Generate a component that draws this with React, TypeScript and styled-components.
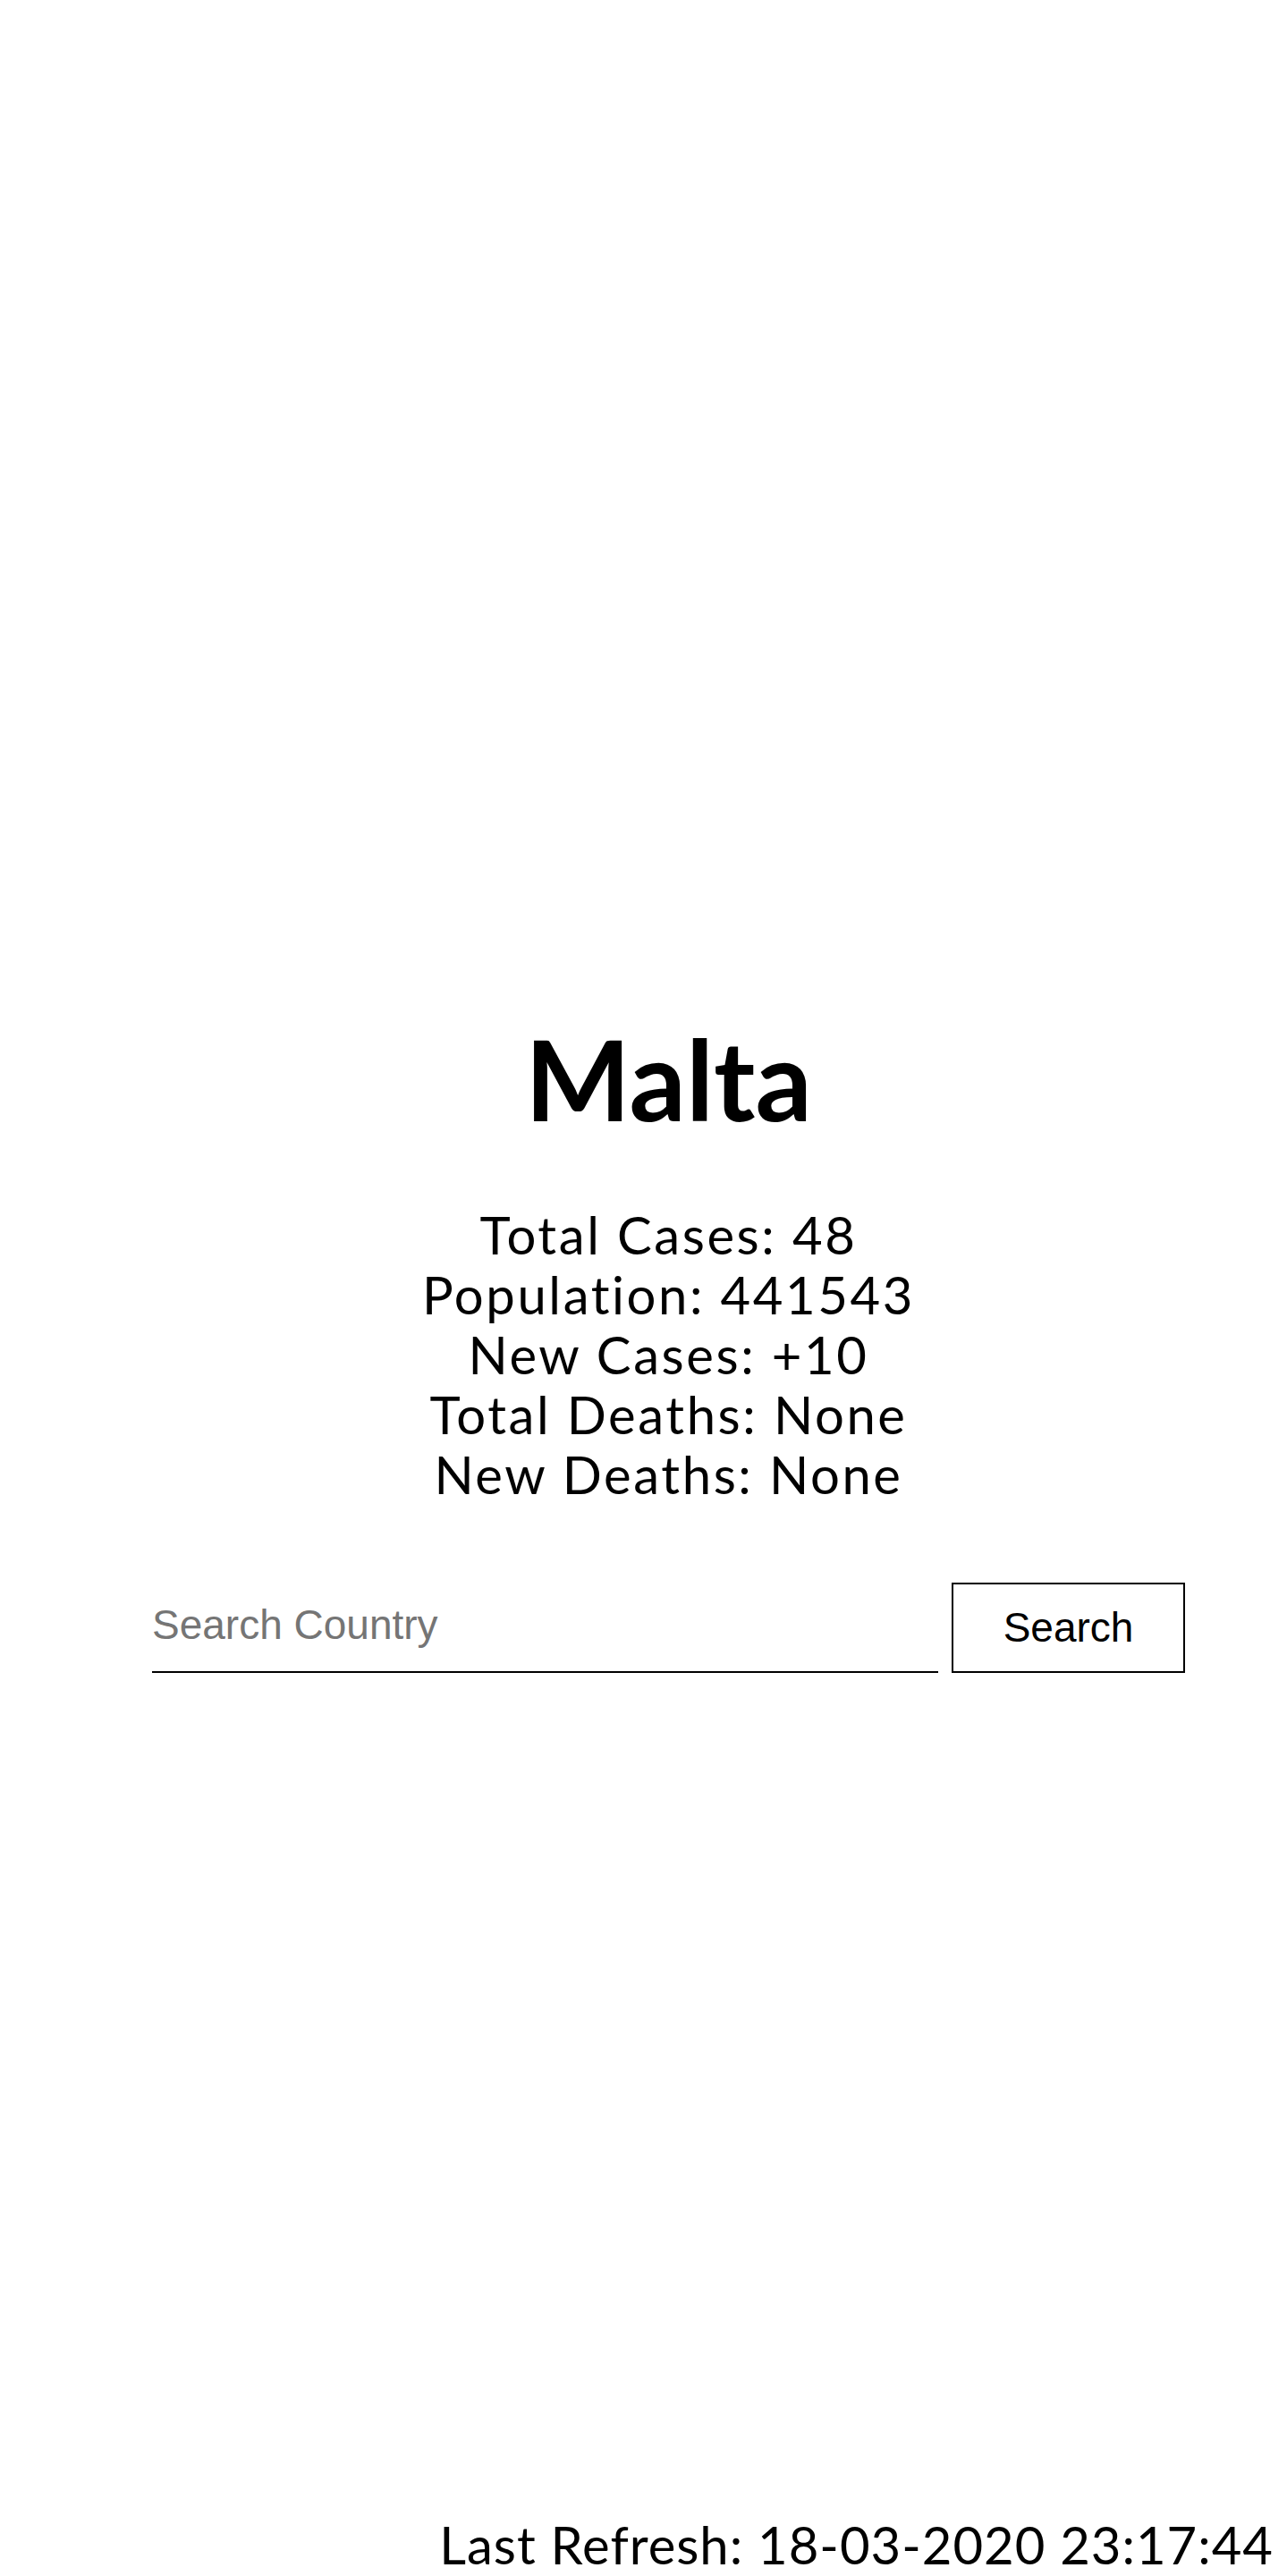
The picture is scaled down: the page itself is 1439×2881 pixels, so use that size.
import React, { useState } from "react";
import styled, { createGlobalStyle } from "styled-components";

const GlobalStyle = createGlobalStyle`
  html, body {
    margin: 0;
    padding: 0;
    background: #fff;
  }
  body {
    font-family: "Lato", "Liberation Sans", sans-serif;
    color: #000;
  }
`;

const Page = styled.div`
  min-height: 100vh;
  display: flex;
  flex-direction: column;
`;

const Main = styled.main`
  flex: 1;
  display: flex;
  flex-direction: column;
  align-items: center;
  padding: 1131px 0 0 56px;
`;

const CountryName = styled.h1`
  margin: 0;
  font-size: 125px;
  line-height: 150px;
  font-weight: 700;
`;

const Stats = styled.div`
  margin-top: 66px;
  text-align: center;
  font-size: 58px;
  line-height: 67px;
  letter-spacing: 2.6px;
`;

const StatLine = styled.div``;

const SearchForm = styled.form`
  margin-top: 88px;
  width: 1155px;
  display: flex;
  gap: 15px;
`;

const SearchInput = styled.input`
  flex: 1;
  height: 101px;
  box-sizing: border-box;
  padding: 0 0 6px;
  border: none;
  border-bottom: 2px solid #000;
  font-family: "Liberation Sans", Arial, sans-serif;
  font-size: 46px;
  outline: none;
  background: transparent;

  &::placeholder {
    color: #757575;
  }
`;

const SearchButton = styled.button`
  width: 261px;
  height: 101px;
  box-sizing: border-box;
  border: 2px solid #000;
  background: #fff;
  font-family: "Liberation Sans", Arial, sans-serif;
  font-size: 46px;
  color: #000;
  padding: 0 0 2px;
`;

const Footer = styled.footer`
  text-align: right;
  padding-right: 15px;
  font-size: 58px;
  line-height: 70px;
  letter-spacing: 1px;
`;

const stats = [
  { label: "Total Cases", value: "48" },
  { label: "Population", value: "441543" },
  { label: "New Cases", value: "+10" },
  { label: "Total Deaths", value: "None" },
  { label: "New Deaths", value: "None" },
];

export default function App() {
  const [query, setQuery] = useState("");

  return (
    <>
      <GlobalStyle />
      <Page>
        <Main>
          <CountryName>Malta</CountryName>
          <Stats>
            {stats.map((s) => (
              <StatLine key={s.label}>
                {s.label}: {s.value}
              </StatLine>
            ))}
          </Stats>
          <SearchForm onSubmit={(e) => e.preventDefault()}>
            <SearchInput
              placeholder="Search Country"
              value={query}
              onChange={(e) => setQuery(e.target.value)}
            />
            <SearchButton type="submit">Search</SearchButton>
          </SearchForm>
        </Main>
        <Footer>Last Refresh: 18-03-2020 23:17:44</Footer>
      </Page>
    </>
  );
}
